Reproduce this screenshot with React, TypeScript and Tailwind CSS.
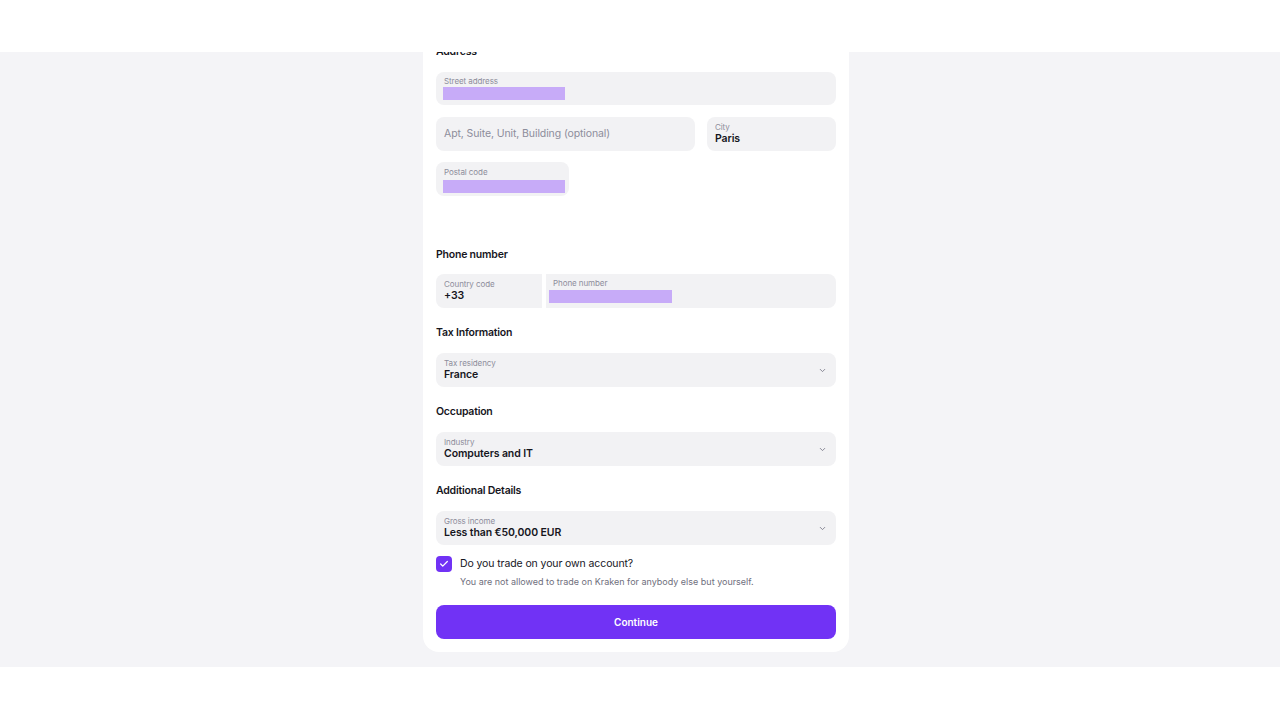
import { ChevronDown, Check } from "lucide-react";

const font = { fontFamily: "Inter, 'Noto Sans', sans-serif" };

function Heading({ children }: { children: string }) {
  return <h2 className="text-[10.5px] leading-4 font-semibold tracking-[-0.02em] text-[#16161d]">{children}</h2>;
}

function Label({ children }: { children: string }) {
  return <div className="text-[8px] leading-[9px] tracking-[-0.01em] text-[#8d8d9b]">{children}</div>;
}

function Value({ children }: { children: string }) {
  return <div className="text-[10.5px] leading-[14px] font-semibold tracking-[-0.01em] text-[#16161d]">{children}</div>;
}

function Blur({ w, mt }: { w: string; mt: string }) {
  return <div className={`h-[13px] bg-[#c7abf8] ${w} ${mt}`} />;
}

function Select({ label, value }: { label: string; value: string }) {
  return (
    <div className="h-[34px] rounded-lg bg-[#f2f2f4] pl-2 pr-[9px] flex items-center justify-between">
      <div className="flex flex-col">
        <Label>{label}</Label>
        <Value>{value}</Value>
      </div>
      <ChevronDown size={9} strokeWidth={2.4} className="text-[#7d7d8b]" />
    </div>
  );
}

export default function App() {
  return (
    <div className="h-[720px] bg-white flex flex-col" style={font}>
      <div className="h-[52px] bg-white shrink-0" />
      <div className="h-[615px] bg-[#f4f4f7] overflow-hidden flex justify-center pr-[8px] shrink-0">
        <div className="w-[426px] -mt-[20px] self-start bg-white rounded-b-2xl pt-[12px] px-[13px] pb-[13px] flex flex-col">
          <Heading>Address</Heading>

          <div className="mt-[12px] h-[33px] rounded-lg bg-[#f2f2f4] pl-[7px] pt-[5px] flex flex-col">
            <div className="pl-px">
              <Label>Street address</Label>
            </div>
            <Blur w="w-[122px]" mt="mt-px" />
          </div>

          <div className="mt-[12px] flex gap-3">
            <div className="w-[259px] h-[34px] rounded-lg bg-[#f2f2f4] px-2 flex items-center text-[10.5px] tracking-[-0.01em] text-[#8d8d9b]">
              Apt, Suite, Unit, Building (optional)
            </div>
            <div className="flex-1 h-[34px] rounded-lg bg-[#f2f2f4] px-2 flex flex-col justify-center">
              <Label>City</Label>
              <Value>Paris</Value>
            </div>
          </div>

          <div className="mt-[11px] w-[133px] h-[34px] rounded-lg bg-[#f2f2f4] pl-[7px] pt-[6px] flex flex-col">
            <div className="pl-px">
              <Label>Postal code</Label>
            </div>
            <Blur w="w-[122px]" mt="mt-[3px]" />
          </div>

          <div className="mt-[51px]">
            <Heading>Phone number</Heading>
          </div>
          <div className="mt-[11px] flex gap-1">
            <div className="w-[106px] h-[34px] rounded-l-lg bg-[#f2f2f4] px-2 flex flex-col justify-center">
              <Label>Country code</Label>
              <Value>+33</Value>
            </div>
            <div className="flex-1 h-[34px] rounded-r-lg bg-[#f2f2f4] pl-[3px] pt-[5px] flex flex-col">
              <div className="pl-[4px]">
                <Label>Phone number</Label>
              </div>
              <Blur w="w-[123px]" mt="mt-[2px]" />
            </div>
          </div>

          <div className="mt-[17px]">
            <Heading>Tax Information</Heading>
          </div>
          <div className="mt-[12px]">
            <Select label="Tax residency" value="France" />
          </div>

          <div className="mt-[17px]">
            <Heading>Occupation</Heading>
          </div>
          <div className="mt-[12px]">
            <Select label="Industry" value="Computers and IT" />
          </div>

          <div className="mt-[17px]">
            <Heading>Additional Details</Heading>
          </div>
          <div className="mt-[12px]">
            <Select label="Gross income" value="Less than €50,000 EUR" />
          </div>

          <div className="mt-[11px] flex items-center gap-2">
            <div className="w-4 h-4 rounded bg-[#7132f5] flex items-center justify-center">
              <Check size={10} strokeWidth={3} className="text-white" />
            </div>
            <span className="text-[10.5px] leading-4 tracking-[-0.01em] text-[#16161d]">Do you trade on your own account?</span>
          </div>
          <div className="pl-6 mt-[3px] text-[9px] leading-[14px] text-[#6f6f7d]">
            You are not allowed to trade on Kraken for anybody else but yourself.
          </div>

          <button className="mt-[16px] h-[34px] rounded-lg bg-[#7132f5] text-white text-[10px] font-semibold">
            Continue
          </button>
        </div>
      </div>
      <div className="flex-1 bg-white" />
    </div>
  );
}
